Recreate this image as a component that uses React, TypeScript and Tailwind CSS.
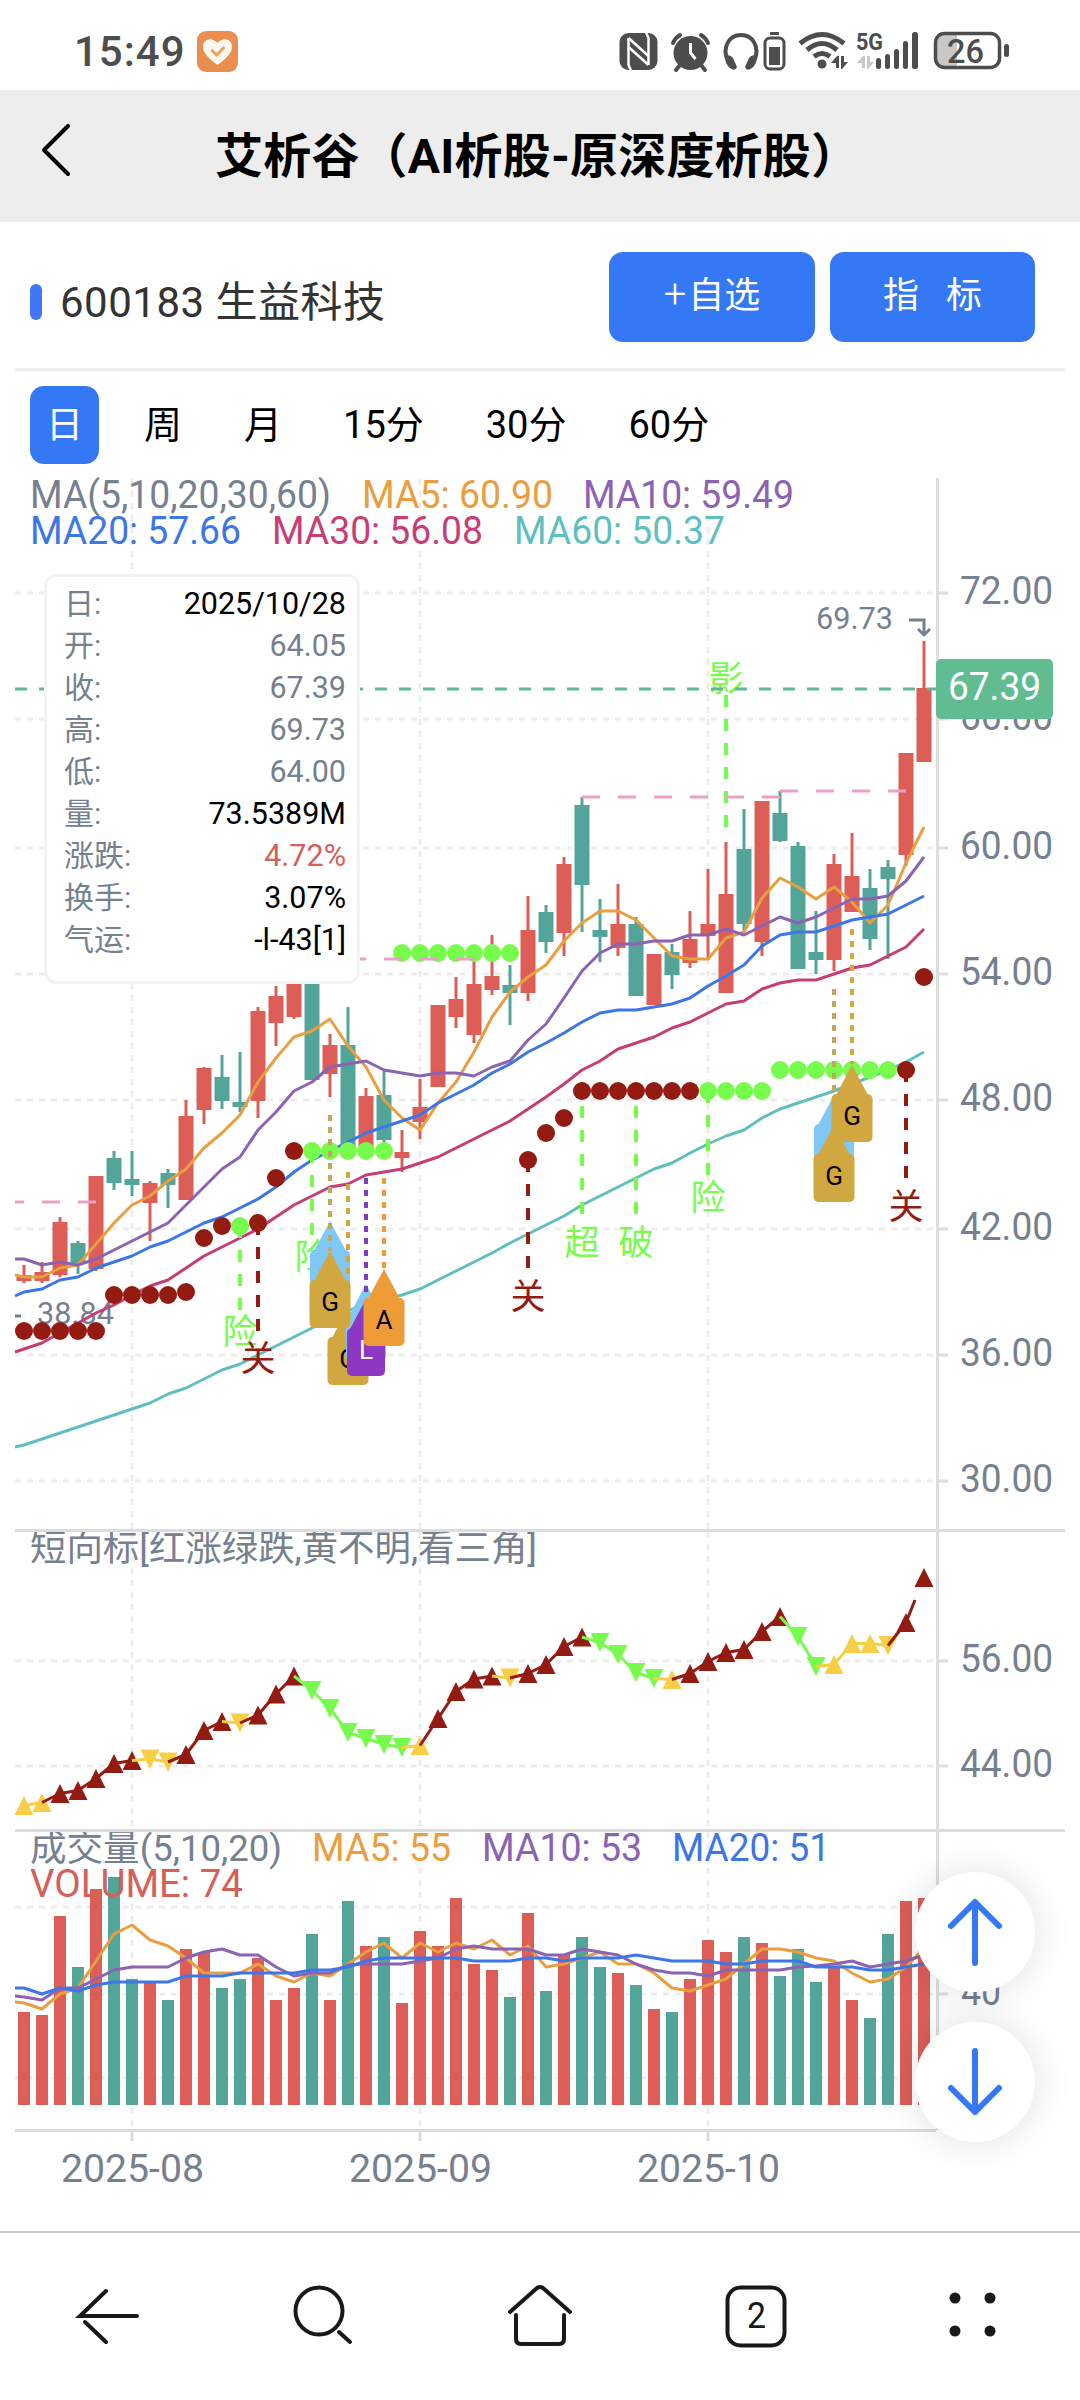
import React from 'react'

const RED = '#dc5e57'
const GREEN = '#53a59a'
const DARK = '#941b12'
const LIME = '#77fb4c'
const YELLOW = '#f7ce46'
const GREY = '#76808f'
const ORANGE = '#e99e40'
const PURPLE = '#8c63b3'
const BLUE = '#3c76e8'
const PINK = '#c73d76'
const TEAL = '#60bfbe'
const GOLD = '#d1a740'

const px = (i: number) => 24 + i * 18

// high, body top, body bottom, low, up
const candles: [number, number, number, number, number][] = [
  [1265, 1275, 1281, 1283, 1], [1262, 1272, 1281, 1283, 1], [1217, 1222, 1275, 1277, 1], [1241, 1243, 1263, 1274, 0],
  [1176, 1176, 1269, 1271, 1], [1151, 1158, 1183, 1190, 0], [1151, 1179, 1185, 1196, 0], [1181, 1183, 1203, 1241, 1],
  [1169, 1173, 1185, 1208, 0], [1100, 1116, 1200, 1200, 1], [1067, 1068, 1110, 1124, 1], [1055, 1077, 1101, 1109, 0],
  [1052, 1102, 1107, 1112, 0], [1007, 1011, 1101, 1118, 1], [986, 996, 1023, 1046, 1], [970, 975, 1017, 1019, 1],
  [965, 970, 1080, 1080, 0], [1034, 1045, 1074, 1097, 1], [1007, 1045, 1148, 1150, 0], [1088, 1096, 1147, 1150, 1],
  [1070, 1095, 1140, 1148, 0], [1130, 1152, 1158, 1172, 1], [1079, 1107, 1122, 1139, 1], [1005, 1005, 1087, 1087, 1],
  [977, 999, 1017, 1028, 1], [958, 984, 1035, 1043, 1], [935, 976, 990, 995, 1], [965, 985, 993, 1025, 0],
  [896, 930, 993, 1001, 1], [905, 912, 942, 953, 0], [857, 864, 933, 956, 1], [797, 805, 885, 932, 0],
  [899, 930, 937, 962, 0], [884, 924, 948, 956, 1], [917, 924, 996, 996, 0], [954, 954, 1005, 1005, 1],
  [944, 952, 975, 989, 0], [911, 939, 963, 968, 1], [869, 924, 936, 960, 1], [842, 894, 993, 993, 1],
  [809, 849, 924, 932, 0], [801, 801, 942, 956, 1], [791, 813, 841, 842, 0], [842, 846, 969, 969, 0],
  [911, 952, 960, 974, 0], [854, 864, 960, 971, 1], [833, 876, 912, 912, 1], [869, 888, 939, 950, 0],
  [860, 867, 879, 959, 0], [753, 753, 855, 866, 1], [641, 688, 762, 762, 1],
]

// each series starts at the left edge of the pane
const ma5 = [1275, 1277, 1277, 1268, 1265, 1244, 1223, 1205, 1196, 1181, 1169, 1148, 1133, 1115, 1082, 1058, 1037, 1031, 1019, 1046, 1067, 1100, 1118, 1130, 1103, 1082, 1052, 1017, 992, 977, 965, 941, 923, 911, 911, 920, 938, 956, 959, 959, 938, 932, 898, 878, 887, 899, 887, 902, 923, 905, 863, 827]
const ma10 = [1259, 1259, 1265, 1262, 1265, 1259, 1250, 1241, 1232, 1223, 1205, 1187, 1169, 1157, 1130, 1112, 1091, 1082, 1067, 1064, 1061, 1070, 1073, 1076, 1073, 1073, 1076, 1067, 1061, 1040, 1024, 998, 971, 953, 944, 944, 941, 941, 935, 935, 929, 935, 926, 917, 923, 917, 908, 899, 899, 896, 881, 857]
const ma20 = [1296, 1292, 1289, 1280, 1277, 1268, 1262, 1256, 1247, 1241, 1232, 1223, 1217, 1208, 1199, 1187, 1172, 1160, 1151, 1142, 1133, 1127, 1121, 1115, 1103, 1094, 1085, 1073, 1064, 1052, 1043, 1033, 1022, 1013, 1010, 1010, 1007, 1004, 998, 986, 976, 965, 946, 935, 932, 932, 926, 920, 917, 914, 905, 896]
const ma30 = [1352, 1349, 1343, 1333, 1323, 1313, 1305, 1295, 1286, 1280, 1268, 1256, 1247, 1238, 1229, 1217, 1205, 1196, 1187, 1184, 1175, 1172, 1169, 1163, 1157, 1148, 1139, 1130, 1121, 1109, 1097, 1084, 1070, 1061, 1049, 1043, 1037, 1028, 1022, 1013, 1004, 1001, 989, 983, 980, 980, 974, 968, 965, 956, 947, 929]
const ma60 = [1447, 1445, 1439, 1433, 1427, 1421, 1415, 1409, 1403, 1394, 1388, 1379, 1370, 1364, 1355, 1346, 1337, 1328, 1319, 1311, 1303, 1300, 1295, 1289, 1280, 1271, 1262, 1253, 1243, 1234, 1225, 1216, 1205, 1196, 1187, 1178, 1169, 1163, 1153, 1144, 1136, 1130, 1118, 1109, 1103, 1097, 1091, 1084, 1077, 1070, 1062, 1052]

// index, y, lime
const dots: [number, number, number][] = [
  [0, 1331, 0], [1, 1331, 0], [2, 1331, 0], [3, 1331, 0], [4, 1331, 0], [5, 1295, 0], [6, 1295, 0], [7, 1295, 0], [8, 1295, 0],
  [9, 1292, 0], [10, 1238, 0], [11, 1226, 0], [12, 1226, 1], [13, 1223, 0], [14, 1178, 0], [15, 1151, 0],
  [16, 1151, 1], [17, 1151, 1], [18, 1151, 1], [19, 1151, 1], [20, 1151, 1],
  [21, 953, 1], [22, 953, 1], [23, 953, 1], [24, 953, 1], [25, 953, 1], [26, 953, 1], [27, 953, 1],
  [28, 1160, 0], [29, 1133, 0], [30, 1118, 0],
  [31, 1091, 0], [32, 1091, 0], [33, 1091, 0], [34, 1091, 0], [35, 1091, 0], [36, 1091, 0], [37, 1091, 0],
  [38, 1091, 1], [39, 1091, 1], [40, 1091, 1], [41, 1091, 1],
  [42, 1070, 1], [43, 1070, 1], [44, 1070, 1], [45, 1070, 1], [46, 1070, 1], [47, 1070, 1], [48, 1070, 1],
  [49, 1070, 0], [50, 977, 0],
]

// index, line start, line end, text baseline, text
const signals: [number, number, number, number, string, string][] = [
  [12, 1226, 1312, 1344, '险', LIME], [13, 1223, 1333, 1371, '关', DARK], [16, 1151, 1237, 1269, '险', LIME],
  [28, 1160, 1268, 1309, '关', DARK], [31, 1082, 1216, 1255, '超', LIME], [34, 1082, 1216, 1255, '破', LIME],
  [38, 1091, 1175, 1210, '险', LIME], [49, 1070, 1180, 1219, '关', DARK], [39, 695, 827, 691, '影', LIME],
]

// centre y, colour, down
const trend: [number, string, number][] = [
  [1805.5, YELLOW, 0], [1802.5, YELLOW, 0], [1793.5, DARK, 0], [1790.5, DARK, 0], [1778.5, DARK, 0], [1763.5, DARK, 0],
  [1760.5, DARK, 0], [1759, YELLOW, 1], [1762, YELLOW, 1], [1754.5, DARK, 0], [1730.5, DARK, 0], [1721.5, DARK, 0],
  [1723, YELLOW, 1], [1715, DARK, 0], [1694, DARK, 0], [1676, DARK, 0], [1690.5, LIME, 1], [1708.5, LIME, 1],
  [1732.5, LIME, 1], [1738.5, LIME, 1], [1744.5, LIME, 1], [1747.5, LIME, 1], [1745.5, YELLOW, 0], [1718.5, DARK, 0],
  [1691.5, DARK, 0], [1679, DARK, 0], [1676, DARK, 0], [1678, YELLOW, 1], [1673.5, DARK, 0], [1664.5, DARK, 0],
  [1646.5, DARK, 0], [1637, DARK, 0], [1642.5, LIME, 1], [1654.5, LIME, 1], [1672.5, LIME, 1], [1678.5, LIME, 1],
  [1679.5, YELLOW, 0], [1673.5, DARK, 0], [1661.5, DARK, 0], [1652.5, DARK, 0], [1649.5, DARK, 0], [1631.5, DARK, 0],
  [1616.5, DARK, 0], [1636.5, LIME, 1], [1666.5, LIME, 1], [1664.5, YELLOW, 0], [1643.5, YELLOW, 0], [1643.5, YELLOW, 0],
  [1645.5, YELLOW, 1], [1622.5, DARK, 0], [1577.5, DARK, 0],
]

const volumes = [2012, 2015, 1916, 1967, 1889, 1877, 1979, 1982, 2000, 1949, 1952, 1988, 1979, 1958, 2000, 1988, 1934, 2000, 1901, 1946, 1937, 2003, 1931, 1946, 1898, 1964, 1970, 1997, 1913, 1991, 1955, 1937, 1967, 1973, 1985, 2009, 2012, 1979, 1940, 1952, 1937, 1943, 1976, 1949, 1982, 1967, 2000, 2018, 1934, 1901, 1898]
const vma5 = [2002, 2003, 2009, 1994, 1988, 1961, 1934, 1925, 1940, 1946, 1958, 1973, 1973, 1973, 1964, 1976, 1982, 1973, 1976, 1964, 1952, 1943, 1958, 1943, 1952, 1943, 1949, 1940, 1955, 1946, 1967, 1964, 1958, 1952, 1964, 1964, 1973, 1988, 1991, 1985, 1979, 1964, 1949, 1949, 1952, 1958, 1961, 1973, 1982, 1979, 1967, 1948]
const vma10 = [1996, 1997, 2000, 1988, 1988, 1979, 1970, 1967, 1967, 1967, 1958, 1952, 1949, 1955, 1955, 1967, 1976, 1973, 1973, 1965, 1964, 1964, 1964, 1961, 1958, 1949, 1946, 1949, 1949, 1949, 1955, 1955, 1949, 1952, 1955, 1964, 1970, 1973, 1973, 1976, 1970, 1970, 1970, 1970, 1967, 1966, 1964, 1961, 1967, 1964, 1961, 1955]
const vma20 = [1988, 1988, 1994, 1988, 1991, 1985, 1982, 1982, 1982, 1982, 1976, 1976, 1976, 1973, 1973, 1973, 1973, 1970, 1970, 1967, 1961, 1958, 1958, 1958, 1958, 1958, 1961, 1961, 1961, 1958, 1958, 1961, 1958, 1958, 1958, 1955, 1958, 1961, 1961, 1961, 1964, 1964, 1961, 1961, 1961, 1967, 1967, 1967, 1970, 1970, 1967, 1964]

const detail = [
  ['日:', '2025/10/28', 'text-black'],
  ['开:', '64.05', 'text-[#76808f]'],
  ['收:', '67.39', 'text-[#76808f]'],
  ['高:', '69.73', 'text-[#76808f]'],
  ['低:', '64.00', 'text-[#76808f]'],
  ['量:', '73.5389M', 'text-black'],
  ['涨跌:', '4.72%', 'text-[#d4605a]'],
  ['换手:', '3.07%', 'text-black'],
  ['气运:', '-l-43[1]', 'text-black'],
]

const yLabels: [number, string][] = [
  [593, '72.00'], [719, '66.00'], [848, '60.00'], [974, '54.00'], [1100, '48.00'], [1229, '42.00'], [1355, '36.00'], [1481, '30.00'],
  [1661, '56.00'], [1766, '44.00'],
]

const linePoints = (data: number[]) => data.map((y, i) => `${i === 0 ? 15 : px(i - 1)},${y}`).join(' ')

function Line({ data, color }: { data: number[]; color: string }) {
  return <polyline points={linePoints(data)} fill="none" stroke={color} strokeWidth={3} strokeLinejoin="round" />
}

function Label({ x, y, w, color, children, size = 38 }: { x: number; y: number; w?: number; color: string; children: string; size?: number }) {
  return (
    <text x={x} y={y} fill={color} fontSize={size} textLength={w} lengthAdjust="spacingAndGlyphs">
      {children}
    </text>
  )
}

function Pin({ i, tip, text, fill, color = '#000', hw = 20.5 }: { i: number; tip: number; text?: string; fill: string; color?: string; hw?: number }) {
  const x = px(i)
  return (
    <g>
      <path d={`M${x} ${tip}L${x + 16} ${tip + 30}H${x - 16}Z`} fill={fill} />
      <rect x={x - hw} y={tip + 29} width={hw * 2} height={48} rx={5} fill={fill} />
      {text && <text x={x} y={tip + 60} fontSize={26} textAnchor="middle" fill={color}>{text}</text>}
    </g>
  )
}

function Dotted({ i, y1, y2, color }: { i: number; y1: number; y2: number; color: string }) {
  return <path d={`M${px(i)} ${y1}V${y2}`} stroke={color} strokeWidth={4} strokeDasharray="6 6" />
}

function Chart() {
  return (
    <svg className="block overflow-visible" width={1080} height={1752} viewBox="0 478 1080 1752">
      {/* grid */}
      <g stroke="#ededed" strokeWidth={3} strokeDasharray="6 6">
        {[...yLabels.map(l => l[0]), 1907, 1994, 2078].map(y => <path key={y} d={`M15 ${y}H936`} />)}
        {[132, 420, 708].map(x => (
          <g key={x}>
            <path d={`M${x} 479V1529`} />
            <path d={`M${x} 1532V1829`} />
            <path d={`M${x} 1832V2129`} />
          </g>
        ))}
      </g>

      {/* candles */}
      {candles.map(([h, t, b, l, up], i) => (
        <g key={i} fill={up ? RED : GREEN}>
          <rect x={px(i) - 1.5} y={h} width={3} height={l - h} />
          <rect x={px(i) - 7.5} y={t} width={15} height={b - t} />
        </g>
      ))}
      <Label x={37} y={1324} w={77} color={GREY} size={32}>38.84</Label>
      <path d="M15 1316h6" stroke={GREY} strokeWidth={3} />
      <Label x={816} y={629} w={77} color={GREY} size={32}>69.73</Label>
      <path d="M909 620h15v15m-6-6l6 6l6-6" fill="none" stroke={GREY} strokeWidth={3} />

      <Line data={ma5} color={ORANGE} />
      <Line data={ma10} color={PURPLE} />
      <Line data={ma20} color={BLUE} />
      <Line data={ma30} color={PINK} />
      <Line data={ma60} color={TEAL} />

      {signals.map(([i, y1, y2, ty, text, color]) => (
        <g key={i}>
          <path d={`M${px(i)} ${y1}V${y2}`} stroke={color} strokeWidth={4} strokeDasharray="12 12" />
          <text x={px(i)} y={ty} fontSize={35} textAnchor="middle" fill={color}>{text}</text>
        </g>
      ))}
      {dots.map(([i, y, lime]) => <circle key={i} cx={px(i)} cy={y} r={9} fill={lime ? LIME : DARK} />)}
      <g stroke="#eb9fc6" strokeWidth={3} strokeDasharray="18 18">
        <path d="M15 1202h9" strokeDasharray="none" />
        <path d="M42 1202H96" />
        <path d="M348 959H474" />
        <path d="M582 797H780" />
        <path d="M780 791H906" />
      </g>

      {/* pins */}
      <Pin i={17} tip={1221} fill="#80c8f8" hw={20} />
      <Pin i={18} tip={1308} text="G" fill={GOLD} />
      <Pin i={19} tip={1284} fill="#80c8f8" hw={20} />
      <Dotted i={17} y1={1115} y2={1251} color="#c3a75c" />
      <Dotted i={18} y1={1172} y2={1276} color="#d1a740" />
      <Pin i={17} tip={1251} text="G" fill={GOLD} />
      <Dotted i={19} y1={1178} y2={1298} color="#7d3fc0" />
      <Pin i={19} tip={1299} text="L" fill="#8d38c4" color="#fff" hw={19} />
      <Dotted i={20} y1={1178} y2={1269} color="#ef9b38" />
      <Pin i={20} tip={1269} text="A" fill="#ef9b38" />
      <Pin i={45} tip={1095} fill="#80c8f8" hw={20} />
      <Pin i={45} tip={1125} text="G" fill={GOLD} />
      <Dotted i={45} y1={989} y2={1091} color="#c3a75c" />
      <Dotted i={46} y1={929} y2={1064} color="#d1a740" />
      <Pin i={46} tip={1065} text="G" fill={GOLD} />

      {/* trend pane */}
      {trend.map(([y, c, down], i) => (
        <path key={i} fill={c} d={down ? `M${px(i) - 9.5} ${y - 9.5}h19l-9.5 19z` : `M${px(i) - 9.5} ${y + 9.5}h19l-9.5 -19z`} />
      ))}
      {trend.map(([y, c], i) => i > 0 && i < 50 && (
        <path key={i} d={`M${px(i - 1)} ${trend[i - 1][0]}L${px(i)} ${y}`} stroke={c} strokeWidth={3} />
      ))}
      <path d="M906 1622.5L915 1600" stroke={DARK} strokeWidth={3} />

      {/* volume pane */}
      {volumes.map((y, i) => <rect key={i} x={px(i) - 6} y={y} width={12} height={2105 - y} fill={candles[i][4] ? RED : GREEN} />)}
      <Line data={vma5} color={ORANGE} />
      <Line data={vma10} color={PURPLE} />
      <Line data={vma20} color={BLUE} />

      {/* legends */}
      <Label x={30} y={508} w={301} color={GREY}>MA(5,10,20,30,60)</Label>
      <Label x={362} y={508} w={191} color={ORANGE}>MA5: 60.90</Label>
      <Label x={583} y={508} w={211} color={PURPLE}>MA10: 59.49</Label>
      <Label x={30} y={544} w={211} color={BLUE}>MA20: 57.66</Label>
      <Label x={272} y={544} w={211} color={PINK}>MA30: 56.08</Label>
      <Label x={514} y={544} w={211} color={TEAL}>MA60: 50.37</Label>
      <Label x={30} y={1561} w={507} color={GREY} size={36}>短向标[红涨绿跌,黄不明,看三角]</Label>
      <Label x={30} y={1861} w={252} color={GREY} size={36}>成交量(5,10,20)</Label>
      <Label x={312} y={1861} w={139} color={ORANGE}>MA5: 55</Label>
      <Label x={482} y={1861} w={160} color={PURPLE}>MA10: 53</Label>
      <Label x={672} y={1861} w={158} color={BLUE}>MA20: 51</Label>
      <Label x={30} y={1897} w={213} color="#d4605a">VOLUME: 74</Label>

      {/* axes */}
      <g stroke="#dddddd" strokeWidth={3}>
        <path d="M937.5 478V2130" />
        <path d="M15 1530.5H1065M15 1830.5H1065M15 2130.5H936" />
        {yLabels.map(([y]) => <path key={y} d={`M939 ${y}h9`} />)}
        <path d="M939 1994h9M132 2132v9M420 2132v9M708 2132v9" />
      </g>
      {yLabels.map(([y, t]) => <Label key={y} x={960} y={y + 11} w={93} color={GREY}>{t}</Label>)}
      <Label x={961} y={2005} w={40} color={GREY}>40</Label>
      <Label x={61} y={2182} w={143} color={GREY}>2025-08</Label>
      <Label x={349} y={2182} w={143} color={GREY}>2025-09</Label>
      <Label x={637} y={2182} w={143} color={GREY}>2025-10</Label>

      {/* last price */}
      <path d="M15 689H936" stroke="#62b894" strokeWidth={3} strokeDasharray="12 12" />
      <rect x={936} y={659} width={117} height={60} rx={5} fill="#61bc92" />
      <Label x={948} y={700} w={93} color="#fff">67.39</Label>
    </svg>
  )
}

function StatusIcons() {
  return (
    <svg className="ml-auto" width={410} height={64} viewBox="0 0 410 64" fill="#4d4d4d">
      {/* nfc */}
      <rect x="9.500" y="13" width="38" height="37" rx="9" />
      <path d="M18.500 18V45L21 50.500M38.500 45V18L36 12.500" fill="none" stroke="#fff" strokeWidth="2.500" />
      <path d="M18.500 18L38.500 36M18.500 27L38.500 45" fill="none" stroke="#fff" strokeWidth="2.500" />
      {/* alarm */}
      <circle cx="80.500" cy="33" r="17" />
      <path d="M63 23a17 17 0 0 1 7-8M98 23a17 17 0 0 0-7-8M70 45l-4 5M91 45l4 5" fill="none" stroke="#4d4d4d" strokeWidth="4" strokeLinecap="round" />
      <path d="M80.500 23v10l5 6" fill="none" stroke="#fff" strokeWidth="3" />
      {/* headphones and their battery */}
      <path d="M117 39C113 28 118 15 131 15s18 13 14 24" fill="none" stroke="#4d4d4d" strokeWidth="4" />
      <path d="M115 37q4-4 8 1l4 9q-2 5-7 1q-5-4-5-11zM147 37q-4-4-8 1l-4 9q2 5 7 1q5-4 5-11z" />
      <rect x="155" y="18" width="19" height="31" rx="5" fill="none" stroke="#4d4d4d" strokeWidth="3" />
      <rect x="160" y="12" width="9" height="3" rx="1" />
      <rect x="159" y="27" width="11" height="18" />
      {/* wifi */}
      <g fill="none" stroke="#4d4d4d" strokeWidth="5">
        <path d="M190 23.500q22-18 44 0M197 30q15-13 30 0M204 36.500q8-6 16 0" />
      </g>
      <circle cx="212" cy="44" r="4.500" />
      <path d="M221 43l6-7h2v12h-3v-5zM231 36h3v6h4l-6 7h-1z" />
      {/* cellular */}
      <text x="246" y="30" fontSize="24" fontWeight="700" textLength="27" lengthAdjust="spacingAndGlyphs">5G</text>
      <path d="M247 43l6-7h2v12h-3v-5zM257 36h3v6h4l-6 7h-1z" fill="#c8c8c8" />
      <rect x="266" y="38" width="5" height="11" rx="2.500" />
      <rect x="275" y="34" width="5" height="15" rx="2.500" />
      <rect x="284" y="29" width="5" height="20" rx="2.500" />
      <rect x="293" y="21" width="5" height="28" rx="2.500" />
      <rect x="302" y="12" width="6" height="37" rx="2.500" />
      {/* battery */}
      <path d="M334 14h13v33h-13q-8 0-8-8V22q0-8 8-8z" fill="#c8c8c8" />
      <rect x="325.500" y="13.500" width="64" height="34" rx="9" fill="none" stroke="#4d4d4d" strokeWidth="3.500" />
      <rect x="394" y="24" width="5" height="13" rx="2.500" />
      <text x="337" y="42.500" fontSize="34" fontWeight="500" textLength="37" lengthAdjust="spacingAndGlyphs">26</text>
    </svg>
  )
}

export default function App() {
  return (
    <main className="flex h-[2400px] w-[1080px] flex-col overflow-hidden bg-white font-['Roboto','Noto_Sans_CJK_SC',sans-serif]">
      <div className="flex h-[90px] items-start pr-[60px] pt-5">
        <span className="ml-[74px] mt-[7px] text-[42px] font-medium leading-[50px] tracking-[1px] text-[#4d4d4d]">15:49</span>
        <svg className="ml-[11px] mt-[11px]" width={41} height={41} viewBox="0 0 41 41">
          <rect width="41" height="41" rx="9" fill="#e98d50" />
          <path d="M20.500 34C11 27 6 22 6 15.500C6 8 15 5.500 20.500 12C26 5.500 35 8 35 15.500C35 22 30 27 20.500 34z" fill="#fff8ee" />
          <path d="M14.500 19l5 5l8-8" fill="none" stroke="#eba45c" strokeWidth="3" />
        </svg>
        <StatusIcons />
      </div>

      <header className="flex h-[132px] items-center bg-[#ededed]">
        <svg className="mb-[12px] ml-[39px]" width={34} height={54} viewBox="0 0 34 54" fill="none" stroke="#000" strokeWidth="4" strokeLinecap="round" strokeLinejoin="round">
          <path d="M29 3L5 27L29 51" />
        </svg>
        <h1 className="ml-[142px] mt-[2px] whitespace-nowrap text-[48px] font-bold leading-none tracking-[0.2px] text-black">艾析谷（AI析股-原深度析股）</h1>
      </header>

      <section className="mx-[15px] flex h-[149px] items-center border-b-[3px] border-[#ededed] pl-[15px] pr-[30px]">
        <span className="mt-[13px] h-9 w-3 rounded-full bg-[#3f77f6]" />
        <span className="ml-[18px] mt-[15px] text-[42px] leading-none tracking-[0.5px] text-[#333]">600183 生益科技</span>
        <button className="ml-auto mt-[3px] h-[90px] w-[206px] rounded-[14px] bg-[#3478f6] pb-[2px] text-[36px] text-white"><span className="mr-[2px] text-[40px] font-light leading-none">+</span>自选</button>
        <button className="ml-[15px] mt-[3px] h-[90px] w-[205px] rounded-[14px] bg-[#3478f6] pb-[2px] text-[36px] text-white">指&nbsp; &nbsp;标</button>
      </section>

      <nav className="flex h-[107px] items-center pl-[30px] pt-px text-[38px] leading-none text-black">
        <span className="flex h-[78px] w-[69px] items-center justify-center rounded-[14px] bg-[#3478f6] text-[37px] text-white">日</span>
        <span className="ml-[45px]">周</span>
        <span className="ml-[62px]">月</span>
        <span className="ml-[61px]">15分</span>
        <span className="ml-[62px]">30分</span>
        <span className="ml-[62px]">60分</span>
      </nav>

      <div className="relative">
        <Chart />
        <div className="absolute left-[44px] top-[96px] h-[410px] w-[316px] rounded-xl border-[3px] border-[#f1f3f5] bg-white pl-[17px] pr-[11px] pt-[6px] text-[30px]">
          {detail.map(([name, value, color]) => (
            <div key={name} className="flex h-[42px] items-center justify-between leading-none">
              <span className="text-[#76808f]">{name}</span>
              <span className={`text-[30.5px] ${color}`}>{value}</span>
            </div>
          ))}
        </div>
        <div className="absolute left-[915px] top-[1394px] flex flex-col gap-[30px]">
          {['M60 91V30M36 54L60 30L84 54', 'M60 29V90M36 66L60 90L84 66'].map(d => (
            <button key={d} className="h-[120px] w-[120px] rounded-full bg-white shadow-[0_0_40px_rgba(0,0,0,0.12)]">
              <svg width={120} height={120} viewBox="0 0 120 120" fill="none" stroke="#3478f6" strokeWidth="6" strokeLinecap="round" strokeLinejoin="round">
                <path d={d} />
              </svg>
            </button>
          ))}
        </div>
      </div>

      <footer className="mt-px flex h-[169px] items-start justify-around border-t-2 border-[#cccccc] pt-[50px]">
        <svg width={70} height={70} viewBox="0 0 70 70" fill="none" stroke="#191919" strokeWidth="4" strokeLinecap="round">
          <path d="M33 8L7 33H64M12 39L33 59" />
        </svg>
        <svg width={70} height={70} viewBox="0 0 70 70" fill="none" stroke="#191919" strokeWidth="4" strokeLinecap="round">
          <circle cx="30" cy="28" r="23.500" />
          <path d="M50 49L61 59" />
        </svg>
        <svg width={70} height={70} viewBox="0 0 70 70" fill="none" stroke="#191919" strokeWidth="4" strokeLinecap="round" strokeLinejoin="round">
          <path d="M5 29L32 5Q35 3 38 5L65 29" />
          <path d="M11 32V56Q11 61 16 61H54Q59 61 59 56V32" />
        </svg>
        <svg width={70} height={70} viewBox="0 0 70 70" fill="#191919">
          <rect x="6.500" y="4.500" width="57" height="58" rx="13" fill="none" stroke="#191919" strokeWidth="4" />
          <text x="35.500" y="45" fontSize="37" textAnchor="middle" textLength="19" lengthAdjust="spacingAndGlyphs">2</text>
        </svg>
        <svg width={70} height={70} viewBox="0 0 70 70" fill="#191919">
          <circle cx="18" cy="15" r="5.500" />
          <circle cx="53" cy="15" r="5.500" />
          <circle cx="18" cy="48" r="5.500" />
          <circle cx="53" cy="48" r="5.500" />
        </svg>
      </footer>
    </main>
  )
}
